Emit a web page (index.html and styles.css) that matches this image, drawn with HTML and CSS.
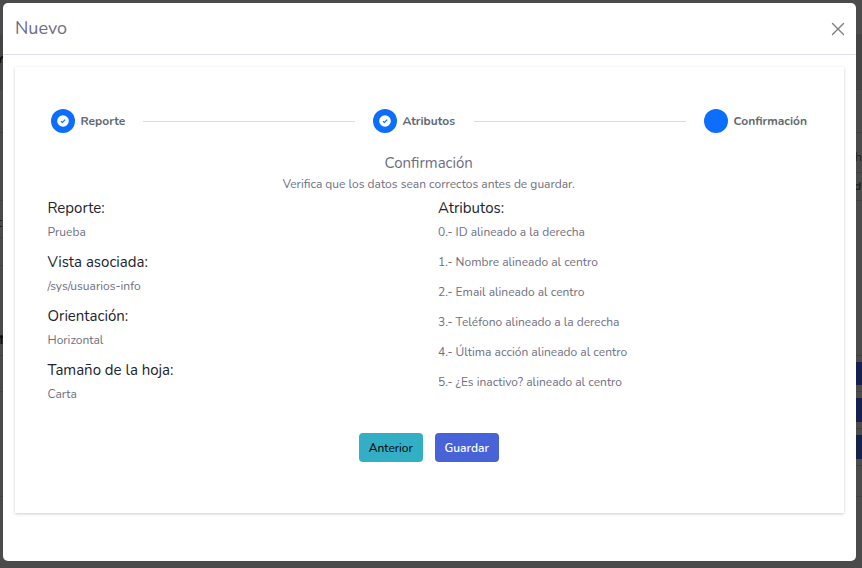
FILE: index.html
```html
<!DOCTYPE html>
<html lang="es">
<head>
<meta charset="utf-8">
<title>Nuevo</title>
<link rel="stylesheet" href="styles.css">
</head>
<body>
<div class="backdrop" aria-hidden="true">
  <svg width="862" height="568" viewBox="0 0 862 568">
    <rect width="862" height="568" fill="#4b4b4b"/>
    <path fill="#444" d="M0 34h3v56H0zM856 34h6v56h-6z"/>
    <path stroke="#414141" d="M0 89.500h3M0 132.500h3M0 200.500h3M0 237.500h3M0 265.500h3M0 355.500h3M0 391.500h3M0 496.500h3M856 89.500h6M856 132.500h6M856 172.500h6M856 200.500h6M856 355.500h6M856 391.500h6M856 428.500h6M856 465.500h6M856 496.500h6"/>
    <rect x="854" y="362" width="20" height="23" rx="3" fill="#15204f"/>
    <rect x="854" y="398" width="20" height="24" rx="3" fill="#15204f"/>
    <rect x="854" y="435" width="20" height="24" rx="3" fill="#15204f"/>
    <path d="M0 63C0 59 1 57 3 57" fill="none" stroke="#111" stroke-width="2"/>
    <path d="M0 337h3M1.500 335v9" stroke="#111" stroke-width="2"/>
    <path d="M0 220.500h2M0 226.500h2" stroke="#222"/>
  </svg>
  <span class="peek peek-h">h</span>
  <span class="peek peek-d">d</span>
</div>
<main class="modal">
  <header class="modal-header">
    <h1 class="title">Nuevo</h1>
    <button class="close" aria-label="Cerrar"><svg width="14" height="14" viewBox="0 0 14 14"><path d="M1.500 1.500l11 11M12.500 1.500l-11 11" stroke="#7d7d7d" stroke-width="1.400" stroke-linecap="round"/></svg></button>
  </header>
  <section class="card">
    <div class="steps">
      <div class="step s1"><span class="dot"><svg width="12" height="12" viewBox="0 0 12 12"><circle cx="6" cy="6" r="5.800" fill="#fff"/><path d="M4 6.200l1.400 1.300L8.200 4.700" fill="none" stroke="#0d6efd" stroke-width="1.200"/></svg></span><span class="label">Reporte</span></div>
      <i class="line"></i>
      <div class="step s2"><span class="dot"><svg width="12" height="12" viewBox="0 0 12 12"><circle cx="6" cy="6" r="5.800" fill="#fff"/><path d="M4 6.200l1.400 1.300L8.200 4.700" fill="none" stroke="#0d6efd" stroke-width="1.200"/></svg></span><span class="label">Atributos</span></div>
      <i class="line"></i>
      <div class="step s3"><span class="dot"></span><span class="label">Confirmación</span></div>
    </div>
    <h2 class="heading">Confirmación</h2>
    <p class="hint">Verifica que los datos sean correctos antes de guardar.</p>
    <div class="summary">
      <dl class="details">
        <dt>Reporte:</dt><dd>Prueba</dd>
        <dt>Vista asociada:</dt><dd>/sys/usuarios-info</dd>
        <dt>Orientación:</dt><dd>Horizontal</dd>
        <dt>Tamaño de la hoja:</dt><dd>Carta</dd>
      </dl>
      <dl class="details">
        <dt>Atributos:</dt>
        <dd>0.- ID alineado a la derecha</dd>
        <dd>1.- Nombre alineado al centro</dd>
        <dd>2.- Email alineado al centro</dd>
        <dd>3.- Teléfono alineado a la derecha</dd>
        <dd>4.- Última acción alineado al centro</dd>
        <dd>5.- ¿Es inactivo? alineado al centro</dd>
      </dl>
    </div>
    <div class="actions">
      <button class="btn btn-info">Anterior</button>
      <button class="btn btn-primary">Guardar</button>
    </div>
  </section>
</main>
</body>
</html>
```
FILE: styles.css
```css
* { box-sizing: border-box; }
body { margin: 0; height: 568px; overflow: hidden; padding: 3px 6px 7px 3px; background: #4b4b4b; color: #6f6e81; font: 12px/18px Nunito, Lato, sans-serif; }
h1, h2, p, dl, dt, dd { margin: 0; font-weight: 400; }
button { font: inherit; border: 0; padding: 0; }
.backdrop { position: absolute; inset: 0; overflow: hidden; }
.backdrop svg { display: block; }
.peek { position: absolute; color: #222; }
.peek-h { left: 855px; top: 148px; }
.peek-d { left: 854px; top: 177px; font-weight: 700; }
.modal { position: relative; height: 558px; border-radius: 5px; background: #fff; }
.modal-header { height: 52px; padding: 0 11px 1px 12px; display: flex; align-items: center; justify-content: space-between; border-bottom: 1px solid #dedee8; }
.title { font-size: 18px; line-height: 24px; }
.close { display: flex; background: none; position: relative; top: 1px; }
.card { margin: 12px 12px 0; height: 446px; padding: 42px 34px 0 32.500px; background: #fff; box-shadow: 0 1px 3px rgba(0,0,0,.2); }
.steps { height: 24px; padding: 0 2px 0 3.500px; display: flex; align-items: center; }
.step { display: flex; align-items: center; gap: 5.500px; flex: none; }
.s1 { width: 92px; }
.s2 { width: 101px; margin-left: 18px; }
.s3 { width: 104px; margin-left: 18px; }
.dot { width: 24px; height: 24px; flex: none; border-radius: 50%; background: #0d6efd; display: flex; align-items: center; justify-content: center; }
.label { color: #5f6a72; font-weight: 700; white-space: nowrap; }
.line { height: 1px; flex: 1; background: #dcdcdc; }
.heading { margin-top: 20px; text-align: center; font-size: 15px; line-height: 20px; }
.hint { margin-top: 2px; text-align: center; }
.summary { margin-top: 6px; height: 216px; display: grid; grid-template-columns: 390.500px 1fr; }
.details dt { color: #22232c; font-size: 15px; line-height: 18px; margin-bottom: 6px; }
.details dd { margin-bottom: 12px; }
.actions { margin-top: 18px; display: flex; justify-content: center; gap: 12px; }
.btn { width: 64px; height: 29px; border-radius: 4px; }
.btn-info { background: #32afc5; color: #000; }
.btn-primary { background: #4863d8; color: #fff; font-weight: 600; }
```
